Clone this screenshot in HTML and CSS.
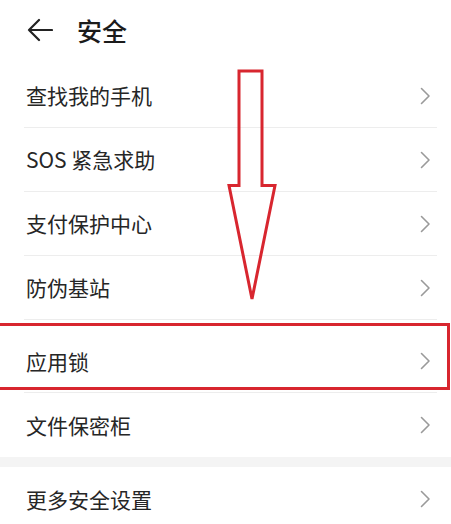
FILE: index.html
```html
<!DOCTYPE html>
<html lang="zh-CN">
<head>
<meta charset="utf-8">
<title>安全</title>
<link rel="stylesheet" href="styles.css">
</head>
<body>
<div class="page">
  <header class="header">
    <svg class="back" width="26" height="24" viewBox="0 0 26 24">
      <path d="M12 2 L2 12 L12 22 M2 12 H25" fill="none" stroke="#222" stroke-width="2.2" stroke-linecap="round" stroke-linejoin="round"/>
    </svg>
    <h1 class="title">安全</h1>
  </header>

  <ul class="list">
    <li class="row"><span class="label">查找我的手机</span><svg class="chev" width="11" height="18" viewBox="0 0 11 18"><path d="M1.5 1.5 L9 9 L1.5 16.5" fill="none" stroke="#9a9a9a" stroke-width="1.6" stroke-linecap="round" stroke-linejoin="round"/></svg></li>
    <li class="row"><span class="label">SOS 紧急求助</span><svg class="chev" width="11" height="18" viewBox="0 0 11 18"><path d="M1.5 1.5 L9 9 L1.5 16.5" fill="none" stroke="#9a9a9a" stroke-width="1.6" stroke-linecap="round" stroke-linejoin="round"/></svg></li>
    <li class="row"><span class="label">支付保护中心</span><svg class="chev" width="11" height="18" viewBox="0 0 11 18"><path d="M1.5 1.5 L9 9 L1.5 16.5" fill="none" stroke="#9a9a9a" stroke-width="1.6" stroke-linecap="round" stroke-linejoin="round"/></svg></li>
    <li class="row"><span class="label">防伪基站</span><svg class="chev" width="11" height="18" viewBox="0 0 11 18"><path d="M1.5 1.5 L9 9 L1.5 16.5" fill="none" stroke="#9a9a9a" stroke-width="1.6" stroke-linecap="round" stroke-linejoin="round"/></svg></li>
    <li class="row row-tall"><span class="label">应用锁</span><svg class="chev" width="11" height="18" viewBox="0 0 11 18"><path d="M1.5 1.5 L9 9 L1.5 16.5" fill="none" stroke="#9a9a9a" stroke-width="1.6" stroke-linecap="round" stroke-linejoin="round"/></svg></li>
    <li class="row row-last"><span class="label">文件保密柜</span><svg class="chev" width="11" height="18" viewBox="0 0 11 18"><path d="M1.5 1.5 L9 9 L1.5 16.5" fill="none" stroke="#9a9a9a" stroke-width="1.6" stroke-linecap="round" stroke-linejoin="round"/></svg></li>
  </ul>
  <div class="band"></div>
  <ul class="list">
    <li class="row row-last"><span class="label">更多安全设置</span><svg class="chev" width="11" height="18" viewBox="0 0 11 18"><path d="M1.5 1.5 L9 9 L1.5 16.5" fill="none" stroke="#9a9a9a" stroke-width="1.6" stroke-linecap="round" stroke-linejoin="round"/></svg></li>
  </ul>

  <div class="highlight"></div>
  <svg class="annot-arrow" width="451" height="524" viewBox="0 0 451 524">
    <polygon points="239,71 262,71 262,185.5 275,185.5 252,299 229,185.5 239,185.5" fill="none" stroke="#d8262f" stroke-width="3" stroke-linejoin="miter"/>
  </svg>
</div>
</body>
</html>
```

FILE: styles.css
```css
* { box-sizing: border-box; }
html, body {
  margin: 0;
  padding: 0;
  background: #ffffff;
}
body {
  font-family: "Noto Sans CJK SC", "Noto Sans", sans-serif;
  color: #1f1f1f;
  width: 451px;
  height: 524px;
  overflow: hidden;
}
.page {
  position: relative;
  width: 451px;
  height: 524px;
  overflow: hidden;
}
.header {
  height: 64px;
  display: flex;
  align-items: center;
  padding-left: 27px;
  padding-bottom: 4px;
}
.back {
  display: block;
  flex: none;
}
.title {
  margin: 0 0 0 24px;
  font-size: 25px;
  font-weight: 500;
  line-height: 1;
  color: #1b1b1b;
}
.list {
  list-style: none;
  margin: 0;
  padding: 0;
}
.row {
  height: 64px;
  margin: 0 14px 0 24px;
  padding: 0 4px 0 2px;
  display: flex;
  align-items: center;
  justify-content: space-between;
  border-bottom: 1px solid #ededed;
}
.row-tall {
  height: 73px;
  padding-top: 10px;
}
.row-last {
  border-bottom: none;
}
.label {
  font-size: 21px;
  font-weight: 400;
  line-height: 1;
  color: #262626;
}
.chev {
  display: block;
  flex: none;
  margin-right: 2px;
}
.band {
  height: 10px;
  background: #f4f4f4;
}
.highlight {
  position: absolute;
  left: -4px;
  top: 323px;
  width: 454px;
  height: 67px;
  border: 3px solid #d8262f;
}
.annot-arrow {
  position: absolute;
  left: 0;
  top: 0;
  pointer-events: none;
}
```
